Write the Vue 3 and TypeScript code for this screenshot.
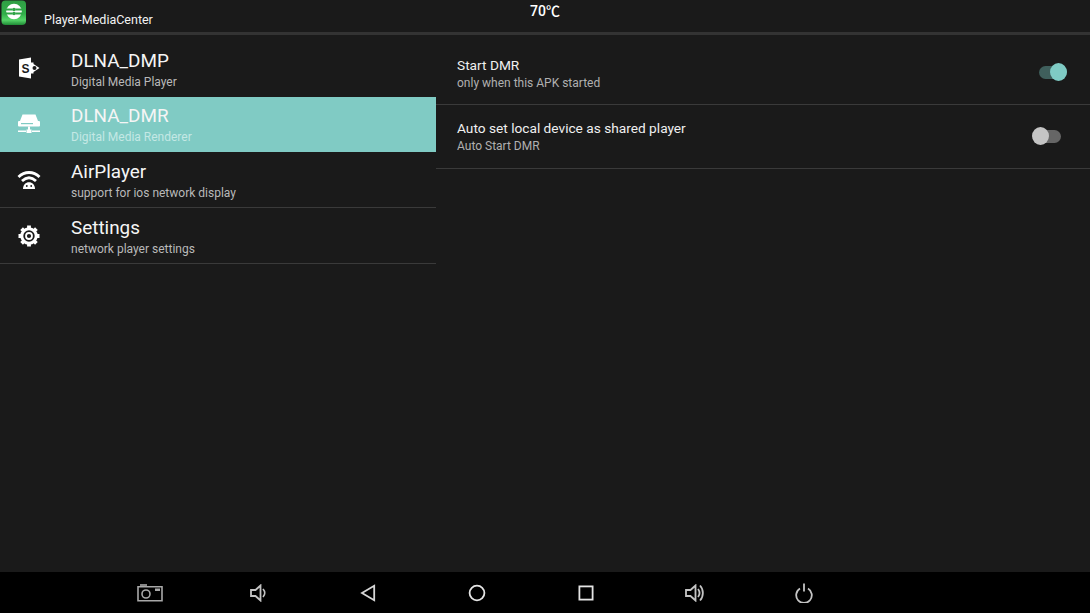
<script setup lang="ts">
const menu = [
  { id: 'dmp', title: 'DLNA_DMP', sub: 'Digital Media Player', active: false },
  { id: 'dmr', title: 'DLNA_DMR', sub: 'Digital Media Renderer', active: true },
  { id: 'air', title: 'AirPlayer', sub: 'support for ios network display', active: false },
  { id: 'set', title: 'Settings', sub: 'network player settings', active: false },
];
const options = [
  { title: 'Start DMR', sub: 'only when this APK started', on: true },
  { title: 'Auto set local device as shared player', sub: 'Auto Start DMR', on: false },
];
</script>

<template>
  <div class="screen">
    <header class="topbar">
      <svg class="logo" width="26" height="26" viewBox="0 0 26 26">
        <defs>
          <linearGradient id="lg" x1="0" y1="0" x2="0" y2="1">
            <stop offset="0" stop-color="#2f9e44" />
            <stop offset="0.55" stop-color="#32b04a" />
            <stop offset="0.8" stop-color="#55d468" />
            <stop offset="1" stop-color="#1f8a35" />
          </linearGradient>
        </defs>
        <rect x="1.500" y="0.500" width="24.500" height="24.500" rx="4" fill="url(#lg)" />
        <circle cx="14" cy="11.500" r="7.800" fill="#fff" />
        <path d="M6 9.500h6.500M15.500 9.500h7M5.500 13.500h7M15.500 13.500h7" stroke="#2ea546" stroke-width="1.800" />
        <circle cx="14" cy="9.500" r="1.800" fill="#2ea546" />
        <circle cx="14" cy="13.500" r="1.800" fill="#2ea546" />
      </svg>
      <span class="app-name">Player-MediaCenter</span>
      <span class="temp">70℃</span>
    </header>

    <main class="content">
      <nav class="menu">
        <div v-for="item in menu" :key="item.id" class="menu-item" :class="{ active: item.active }">
          <div class="menu-icon">
            <svg v-if="item.id === 'dmp'" width="24" height="24" viewBox="0 0 24 24">
              <path d="M2 3.500 14 1.500v21L2 20.500z" fill="#fff" />
              <path d="M14 6.500h2.500V8l6 4-6 4v1.500H14z" fill="#fff" />
              <circle cx="17.500" cy="12" r="2" fill="#1a1a1a" />
              <text x="4.400" y="16.600" class="s-glyph">S</text>
            </svg>
            <svg v-else-if="item.id === 'dmr'" width="24" height="24" viewBox="0 0 24 24">
              <path d="M5.500 2.500h13L21 9H3z" fill="#fff" />
              <rect x="1" y="9" width="22" height="5.500" rx="1" fill="#fff" />
              <rect x="4" y="11" width="12" height="1.200" fill="#80cbc4" />
              <rect x="11" y="14.500" width="2" height="5" fill="#fff" />
              <rect x="1" y="18.500" width="8" height="1.500" fill="#fff" />
              <rect x="15" y="18.500" width="8" height="1.500" fill="#fff" />
              <rect x="9.500" y="17.500" width="5" height="3.500" fill="#fff" />
            </svg>
            <svg v-else-if="item.id === 'air'" width="24" height="24" viewBox="0 0 24 24">
              <path d="M1.500 9C7.500 3 16.500 3 22.500 9" fill="none" stroke="#fff" stroke-width="2.800" />
              <path d="M5 13c4.500-4.200 9.500-4.200 14 0" fill="none" stroke="#fff" stroke-width="2.800" />
              <path d="M6 21c0-4.300 2.800-6.800 6-6.800s6 2.500 6 6.800z" fill="#fff" />
              <circle cx="9.800" cy="18" r="0.900" fill="#1a1a1a" />
              <circle cx="14.200" cy="18" r="0.900" fill="#1a1a1a" />
            </svg>
            <svg v-else width="24" height="24" viewBox="0 0 24 24">
              <circle cx="12" cy="12" r="7.200" fill="none" stroke="#fff" stroke-width="3" />
              <circle cx="12" cy="12" r="3" fill="none" stroke="#fff" stroke-width="1.800" />
              <path
                d="M12 1.500v4M12 18.500v4M1.500 12h4M18.500 12h4M4.600 4.600l2.900 2.900M16.500 16.500l2.900 2.900M4.600 19.400l2.900-2.900M16.500 7.500l2.900-2.900"
                stroke="#fff"
                stroke-width="3.800"
              />
            </svg>
          </div>
          <div class="menu-text">
            <div class="menu-title">{{ item.title }}</div>
            <div class="menu-sub">{{ item.sub }}</div>
          </div>
        </div>
      </nav>

      <section class="panel">
        <div v-for="opt in options" :key="opt.title" class="option">
          <div class="option-text">
            <div class="option-title">{{ opt.title }}</div>
            <div class="option-sub">{{ opt.sub }}</div>
          </div>
          <div class="switch" :class="{ on: opt.on }">
            <span class="track"></span>
            <span class="thumb"></span>
          </div>
        </div>
      </section>
    </main>

    <footer class="navbar">
      <svg width="26" height="18" viewBox="0 0 26 18" fill="none" stroke="#a8a8a8" stroke-width="1.600">
        <path d="M1 16.800V2.800h24v14z" />
        <path d="M3 1h7" />
        <circle cx="9" cy="10" r="4" />
        <rect x="18" y="4.500" width="5" height="2.500" fill="#a8a8a8" stroke="none" />
      </svg>
      <svg width="18" height="18" viewBox="0 0 18 18" fill="none" stroke="#c4c4c4" stroke-width="1.800">
        <path d="M1 6h4.500L10.500 1.500v15L5.500 12H1z" />
        <path d="M13 5c2.200 2.300 2.200 5.700 0 8" />
      </svg>
      <svg width="16" height="18" viewBox="0 0 16 18" fill="none" stroke="#d6d6d6" stroke-width="1.800">
        <path d="M14.200 1.800v14.400L2 9z" />
      </svg>
      <svg width="18" height="18" viewBox="0 0 18 18" fill="none" stroke="#e4e4e4" stroke-width="1.800">
        <circle cx="9" cy="9" r="7.400" />
      </svg>
      <svg width="16" height="16" viewBox="0 0 16 16" fill="none" stroke="#e4e4e4" stroke-width="1.800">
        <rect x="1.400" y="1.400" width="13.200" height="13.200" />
      </svg>
      <svg width="20" height="18" viewBox="0 0 20 18" fill="none" stroke="#c4c4c4" stroke-width="1.800">
        <path d="M1 6h4.500L10.500 1.500v15L5.500 12H1z" />
        <path d="M13 5c1.800 2.300 1.800 5.700 0 8M15 1.500c3.800 4 3.800 11 0 15" />
      </svg>
      <svg width="18" height="20" viewBox="0 0 18 20" fill="none" stroke="#c4c4c4" stroke-width="1.800">
        <path d="M5 5.500a7.800 7.800 0 1 0 8 0" />
        <path d="M9 .5v8" />
      </svg>
    </footer>
  </div>
</template>

<style scoped>
.screen {
  width: 1090px;
  height: 613px;
  display: flex;
  flex-direction: column;
  background: #1a1a1a;
  color: #fff;
  font-family: Roboto, "Liberation Sans", sans-serif;
  overflow: hidden;
}

.topbar {
  position: relative;
  height: 32px;
  flex: none;
  border-bottom: 3px solid #333;
  display: flex;
  align-items: flex-start;
}

.logo {
  flex: none;
  margin-right: 18px;
}

.app-name {
  font-size: 12.500px;
  line-height: 15px;
  margin-top: 12px;
  color: #f2f2f2;
}

.temp {
  position: absolute;
  left: 530px;
  top: 3px;
  font-family: Roboto, "Noto Sans CJK SC", sans-serif;
  font-size: 14px;
  line-height: 17px;
  font-weight: 500;
}

.content {
  flex: 1;
  display: flex;
  min-height: 0;
}

.menu {
  width: 436px;
  flex: none;
  padding-top: 6px;
}

.menu-item {
  height: 55px;
  box-sizing: border-box;
  border-bottom: 1px solid #3a3a3a;
  display: flex;
  align-items: center;
  margin-bottom: 1px;
}

.menu-item:first-child {
  border-bottom-color: transparent;
}

.menu-item.active {
  background: #80cbc4;
  border-bottom-color: #80cbc4;
}

.menu-icon {
  width: 71px;
  flex: none;
  display: flex;
  justify-content: center;
  padding-right: 14px;
  box-sizing: border-box;
}

.s-glyph {
  font-family: "Liberation Sans", sans-serif;
  font-size: 12px;
  font-weight: 700;
  fill: #1a1a1a;
}

.menu-text {
  padding-top: 2px;
}

.menu-item:first-child .menu-text {
  padding-top: 4px;
}

.menu-title {
  font-size: 18.900px;
  line-height: 22px;
  color: #f5f5f5;
}

.menu-sub {
  font-size: 12px;
  line-height: 16px;
  margin-top: 2px;
  color: #b9b9b9;
}

.active .menu-sub {
  color: #c4e8e4;
}

.panel {
  flex: 1;
  min-width: 0;
}

.option {
  height: 64px;
  box-sizing: border-box;
  border-bottom: 1px solid #3a3a3a;
  display: flex;
  align-items: center;
  justify-content: space-between;
  padding: 0 28px 0 21px;
}

.option:first-child {
  height: 70px;
  padding-top: 6px;
}

.option:first-child .option-text {
  padding-top: 2px;
}

.option-title {
  font-size: 13.700px;
  line-height: 18px;
  color: #f0f0f0;
}

.option-sub {
  font-size: 12px;
  line-height: 16px;
  margin-top: 1px;
  color: #b0b0b0;
}

.switch {
  position: relative;
  width: 30px;
  height: 18px;
  flex: none;
  margin-bottom: 2px;
}

.track {
  position: absolute;
  left: 1px;
  right: 1px;
  top: 3px;
  height: 13px;
  border-radius: 7px;
  background: #666;
}

.thumb {
  position: absolute;
  left: 0;
  top: 0;
  width: 17px;
  height: 18px;
  border-radius: 50%;
  background: #c4c4c4;
}

.switch.on {
  transform: translateX(6px);
}

.switch.on .track {
  background: #3f5f5c;
}

.switch.on .thumb {
  left: 12px;
  background: #7fcbc4;
}

.navbar {
  height: 41px;
  flex: none;
  background: #000;
  box-sizing: border-box;
  padding-left: 95px;
  display: grid;
  grid-template-columns: repeat(7, 109px);
  align-items: center;
  justify-items: center;
}
</style>
